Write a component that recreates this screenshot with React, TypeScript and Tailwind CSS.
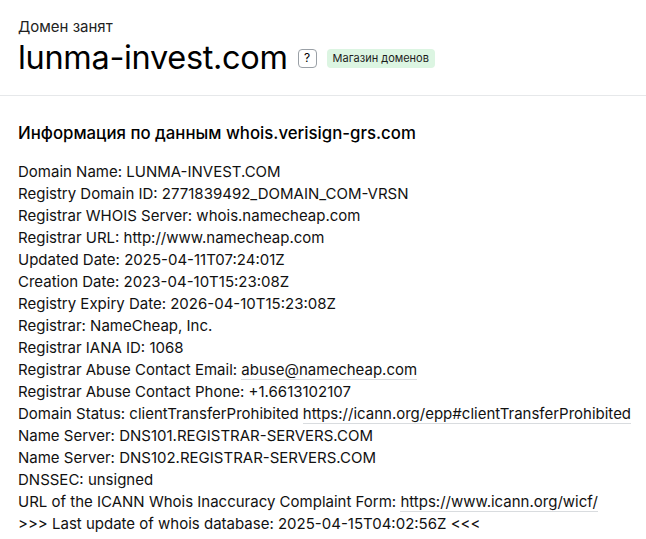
const lines: { label: string; link?: string }[] = [
  { label: "Domain Name: LUNMA-INVEST.COM" },
  { label: "Registry Domain ID: 2771839492_DOMAIN_COM-VRSN" },
  { label: "Registrar WHOIS Server: whois.namecheap.com" },
  { label: "Registrar URL: http://www.namecheap.com" },
  { label: "Updated Date: 2025-04-11T07:24:01Z" },
  { label: "Creation Date: 2023-04-10T15:23:08Z" },
  { label: "Registry Expiry Date: 2026-04-10T15:23:08Z" },
  { label: "Registrar: NameCheap, Inc." },
  { label: "Registrar IANA ID: 1068" },
  { label: "Registrar Abuse Contact Email: ", link: "abuse@namecheap.com" },
  { label: "Registrar Abuse Contact Phone: +1.6613102107" },
  {
    label: "Domain Status: clientTransferProhibited ",
    link: "https://icann.org/epp#clientTransferProhibited",
  },
  { label: "Name Server: DNS101.REGISTRAR-SERVERS.COM" },
  { label: "Name Server: DNS102.REGISTRAR-SERVERS.COM" },
  { label: "DNSSEC: unsigned" },
  {
    label: "URL of the ICANN Whois Inaccuracy Complaint Form: ",
    link: "https://www.icann.org/wicf/",
  },
  { label: ">>> Last update of whois database: 2025-04-15T04:02:56Z <<<" },
];

export default function App() {
  return (
    <div
      className="min-h-screen bg-white text-[#111]"
      style={{ fontFamily: "Inter, 'Noto Sans', sans-serif" }}
    >
      {/* header */}
      <header className="border-b border-[#e6e8ea] px-[18px] pt-[17px] pb-[18px]">
        <div className="text-[15px] leading-[20px] text-[#222]">Домен занят</div>
        <div className="mt-[2px] flex items-center gap-[10px]">
          <h1 className="text-[32.5px] font-normal leading-[38px] tracking-[-0.01em] text-black">
            lunma-invest.com
          </h1>
          <span className="flex h-[19px] w-[19px] items-center justify-center rounded-[4px] border border-[#9aa0a6] text-[12px] leading-none text-black">
            ?
          </span>
          <span className="rounded-[4px] bg-[#dcf5e2] px-[6px] py-[3px] text-[11px] leading-[13px] text-[#1c1c1c]">
            Магазин доменов
          </span>
        </div>
      </header>

      {/* whois block */}
      <section className="px-[18px] pt-[25px]">
        <h2 className="text-[16.8px] font-medium leading-[24px] text-black">
          Информация по данным whois.verisign-grs.com
        </h2>
        <div className="mt-[16px] text-[15px] leading-[22px] text-[#111]">
          {lines.map((l, i) => (
            <div key={i} className="whitespace-nowrap">
              {l.label}
              {l.link && (
                <span className="border-b border-[#d9dcdf]">{l.link}</span>
              )}
            </div>
          ))}
        </div>
      </section>
    </div>
  );
}
